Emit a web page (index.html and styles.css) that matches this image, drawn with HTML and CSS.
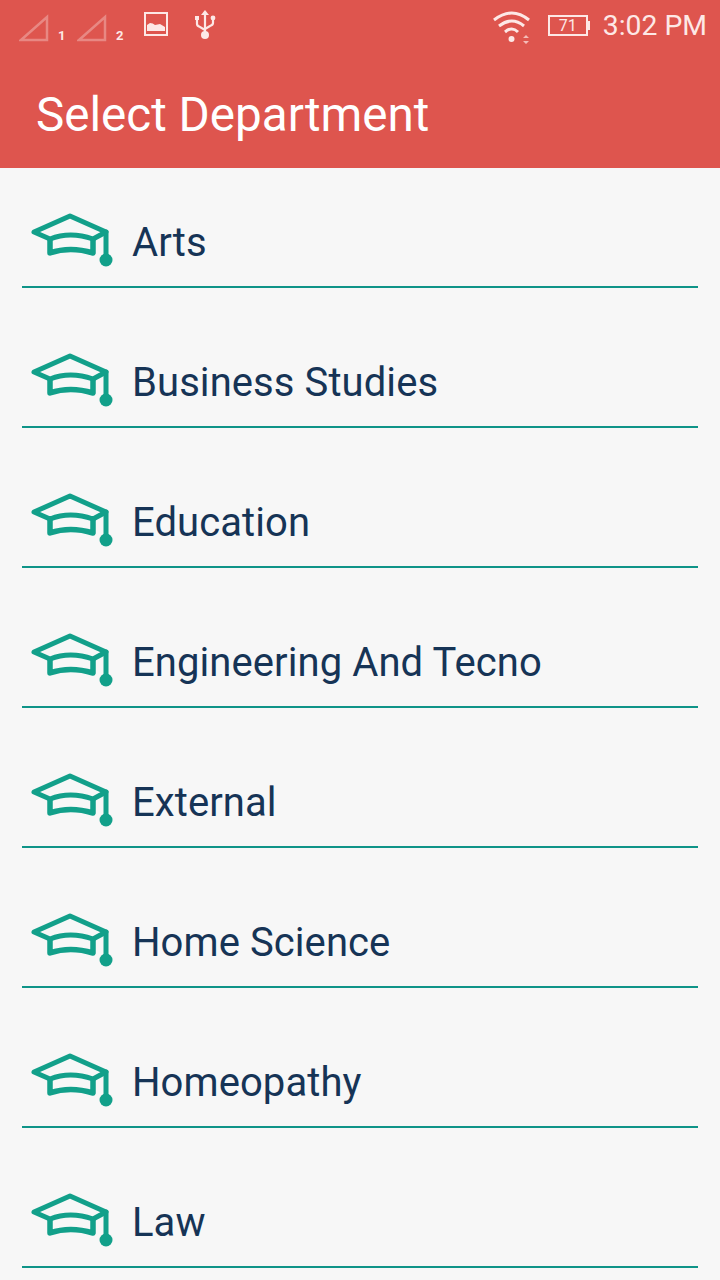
FILE: index.html
```html
<!DOCTYPE html>
<html lang="en">
<head>
<meta charset="utf-8">
<title>Select Department</title>
<link rel="stylesheet" href="styles.css">
</head>
<body>
<svg class="defs" width="0" height="0"><defs>
<symbol id="cap" viewBox="0 0 84 56">
<path d="M4 20 L40 4 L76 20 L63 27 Q40 19 20 27 Z" fill="none" stroke="currentColor" stroke-width="5" stroke-linejoin="round"/>
<path d="M76 20 V44" fill="none" stroke="currentColor" stroke-width="5" stroke-linecap="round"/>
<path d="M20 27 V41 Q40 34 63 41 V27" fill="none" stroke="currentColor" stroke-width="5.500" stroke-linejoin="round"/>
<circle cx="76" cy="48" r="6.500" fill="currentColor"/>
</symbol>
</defs></svg>
<div class="phone">
<header class="appbar">
<div class="status">
<div class="status-left">
<span class="sim"><svg width="32" height="28" viewBox="0 0 32 28"><path d="M2 26 L28 3 V26 Z" fill="none" stroke="#fff" stroke-opacity=".3" stroke-width="2.500"/></svg><b>1</b></span>
<span class="sim"><svg width="32" height="28" viewBox="0 0 32 28"><path d="M2 26 L28 3 V26 Z" fill="none" stroke="#fff" stroke-opacity=".3" stroke-width="2.500"/></svg><b>2</b></span>
<svg class="pic" width="24" height="24" viewBox="0 0 24 24"><rect x="1" y="1" width="22" height="22" fill="none" stroke="#fde8e6" stroke-width="2"/><path d="M3 19 V13 L6 11 Q9 11 11 13 L16 12 L21 15 V19 Z" fill="#fde8e6"/></svg>
<svg class="usb" width="22" height="30" viewBox="0 0 22 30"><path d="M11 4 V25 M3 9 V14 Q3 16 6 17 L11 20 M19 9 V13 Q19 15 16 16 L11 19" fill="none" stroke="#fde8e6" stroke-width="2.200"/><path d="M11 0 L15 5 H7 Z" fill="#fde8e6"/><circle cx="11" cy="25" r="4" fill="#fde8e6"/><rect x="1" y="6" width="4" height="4" fill="#fde8e6"/><circle cx="19" cy="8" r="2.400" fill="#fde8e6"/></svg>
</div>
<div class="status-right">
<svg class="wifi" width="38" height="34" viewBox="0 0 38 34"><path d="M1 10 Q19 -4 36 10 M6 16 Q19 6 31 16 M12 22 Q19 16 25 22" fill="none" stroke="#fde8e6" stroke-width="3"/><circle cx="18.500" cy="29" r="3" fill="#fde8e6"/><path d="M33 25 l3 3 h-6 Z M33 34 l3 -3 h-6 Z" fill="#fde8e6" opacity=".7"/></svg>
<span class="battery"><span class="battery-body">71</span><span class="battery-tip"></span></span>
<span class="clock">3:02 PM</span>
</div>
</div>
<h1 class="title">Select Department</h1>
</header>
<main class="list">
<div class="row"><svg class="cap"><use href="#cap"/></svg><span>Arts</span></div>
<div class="row"><svg class="cap"><use href="#cap"/></svg><span>Business Studies</span></div>
<div class="row"><svg class="cap"><use href="#cap"/></svg><span>Education</span></div>
<div class="row"><svg class="cap"><use href="#cap"/></svg><span>Engineering And Tecno</span></div>
<div class="row"><svg class="cap"><use href="#cap"/></svg><span>External</span></div>
<div class="row"><svg class="cap"><use href="#cap"/></svg><span>Home Science</span></div>
<div class="row"><svg class="cap"><use href="#cap"/></svg><span>Homeopathy</span></div>
<div class="row"><svg class="cap"><use href="#cap"/></svg><span>Law</span></div>
</main>
</div>
</body>
</html>
```
FILE: styles.css
```css
* { box-sizing: border-box; }
html, body { margin: 0; padding: 0; }
body { font-family: Roboto, sans-serif; background: #f7f7f7; overflow: hidden; }
.defs { position: absolute; }
.phone { width: 720px; height: 1280px; overflow: hidden; }
.appbar { height: 168px; background: #de554e; color: #fff; }
.status { height: 56px; display: flex; justify-content: space-between; align-items: center; padding: 0 13px 4px 19px; }
.status-left, .status-right { display: flex; align-items: center; }
.sim { display: flex; align-items: flex-end; width: 58px; height: 32px; }
.sim b { font-size: 13px; font-weight: 700; color: #fde8e6; margin-left: 7px; margin-bottom: 0; line-height: 12px; }
.pic { margin-left: 9px; margin-right: 26px; margin-top: -4px; }
.usb { margin-top: -2px; }
.wifi { margin-right: 17px; margin-top: 2px; }
.battery { display: flex; align-items: center; margin-right: 13px; margin-top: -2px; }
.battery-body { width: 40px; height: 21px; border: 2px solid #fde8e6; color: #fde8e6; font-size: 16px; line-height: 17px; text-align: center; }
.battery-tip { width: 2px; height: 9px; background: #fde8e6; }
.clock { font-size: 28.300px; color: #fde8e6; line-height: 32px; }
.title { margin: 0; padding: 32px 0 0 36px; font-size: 47.600px; font-weight: 400; line-height: 54px; }
.list { padding: 0 22px; display: flex; flex-direction: column; gap: 20px; }
.row { height: 120px; display: flex; align-items: flex-end; border-bottom: 2px solid #0f9488; color: #163456; font-size: 40px; letter-spacing: 0.08px; padding-bottom: 19px; line-height: 48px; }
.cap { width: 84px; height: 56px; color: #12a08a; margin: 0 18px -1px 8px; flex: none; }
```
